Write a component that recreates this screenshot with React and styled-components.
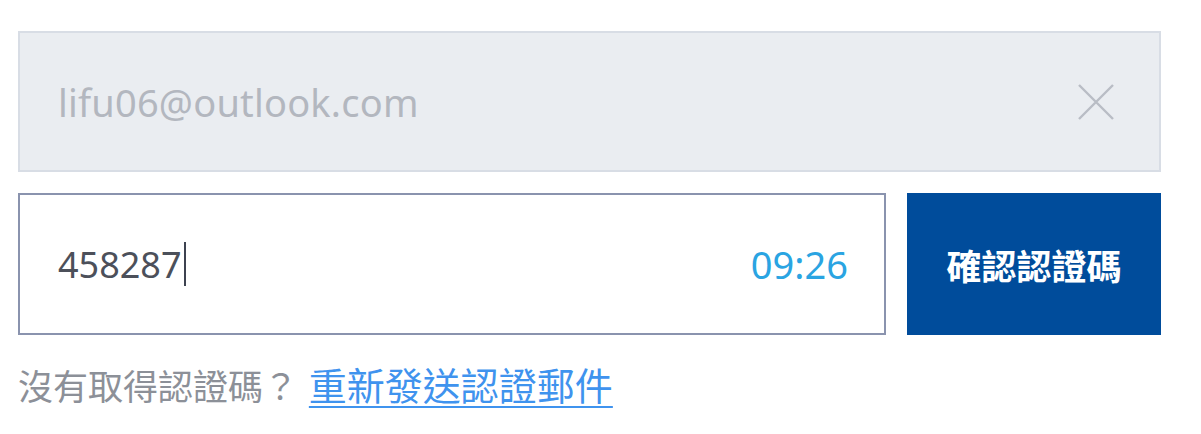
import React from "react";
import styled, { createGlobalStyle } from "styled-components";

const GlobalStyle = createGlobalStyle`
  html, body {
    margin: 0;
    padding: 0;
    background: #ffffff;
  }
  body {
    font-family: "Noto Sans", "Noto Sans CJK TC", sans-serif;
  }
`;

function App() {
  return (
    <>
      <GlobalStyle />
      <Form>
        <EmailField>
          <EmailText>lifu06@outlook.com</EmailText>
          <ClearButton aria-label="clear">
            <svg width="38" height="38" viewBox="0 0 38 38">
              <path
                d="M2 2 L36 36 M36 2 L2 36"
                stroke="#b9bdc5"
                strokeWidth="2.4"
                fill="none"
              />
            </svg>
          </ClearButton>
        </EmailField>
        <CodeRow>
          <CodeField>
            <CodeText>
              458287
              <Caret />
            </CodeText>
            <Timer>09:26</Timer>
          </CodeField>
          <SubmitButton>確認認證碼</SubmitButton>
        </CodeRow>
        <Hint>
          沒有取得認證碼？ <ResendLink href="#">重新發送認證郵件</ResendLink>
        </Hint>
      </Form>
    </>
  );
}

const Form = styled.div`
  width: 1143px;
  padding: 31px 0 0 18px;
  display: flex;
  flex-direction: column;
`;

const EmailField = styled.div`
  box-sizing: border-box;
  height: 141px;
  background: #eaedf1;
  border: 2px solid #d8dde5;
  display: flex;
  align-items: center;
  justify-content: space-between;
  padding: 0 44px 0 38px;
`;

const EmailText = styled.span`
  font-family: "Noto Sans", sans-serif;
  font-size: 38px;
  color: #b3b7bf;
  letter-spacing: 0.2px;
`;

const ClearButton = styled.button`
  border: none;
  background: none;
  padding: 0;
  display: flex;
  cursor: pointer;
`;

const CodeRow = styled.div`
  display: flex;
  gap: 21px;
  margin-top: 21px;
  height: 142px;
`;

const CodeField = styled.div`
  box-sizing: border-box;
  width: 868px;
  border: 2px solid #8a93ae;
  background: #fff;
  display: flex;
  align-items: center;
  justify-content: space-between;
  padding: 0 36px 0 38px;
`;

const CodeText = styled.span`
  display: flex;
  align-items: center;
  font-family: "Noto Sans", sans-serif;
  font-size: 36px;
  color: #4c505a;
`;

const Caret = styled.span`
  display: inline-block;
  width: 2px;
  height: 44px;
  margin-left: 2px;
  background: #3d4250;
`;

const Timer = styled.span`
  font-family: "Noto Sans", sans-serif;
  font-size: 38px;
  color: #2aa4e2;
`;

const SubmitButton = styled.button`
  width: 254px;
  border: none;
  background: #004c9b;
  color: #ffffff;
  font-family: "Noto Sans CJK TC", sans-serif;
  font-weight: 700;
  font-size: 35px;
  padding: 0;
  cursor: pointer;
`;

const Hint = styled.p`
  margin: 26px 0 0;
  font-family: "Noto Sans CJK TC", sans-serif;
  font-size: 35px;
  line-height: 46px;
  color: #8c9098;
`;

const ResendLink = styled.a`
  margin-left: 3px;
  font-size: 38px;
  color: #3f93ee;
  text-decoration: underline;
  text-underline-offset: 6px;
  text-decoration-thickness: 2px;
`;

export default App;
